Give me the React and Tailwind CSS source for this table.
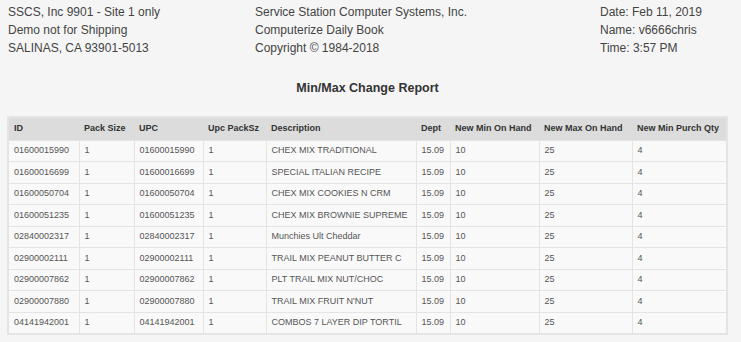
import React from "react";

const rows = [
  ["01600015990", "CHEX MIX TRADITIONAL"],
  ["01600016699", "SPECIAL ITALIAN RECIPE"],
  ["01600050704", "CHEX MIX COOKIES N CRM"],
  ["01600051235", "CHEX MIX BROWNIE SUPREME"],
  ["02840002317", "Munchies Ult Cheddar"],
  ["02900002111", "TRAIL MIX PEANUT BUTTER C"],
  ["02900007862", "PLT TRAIL MIX NUT/CHOC"],
  ["02900007880", "TRAIL MIX FRUIT N'NUT"],
  ["04141942001", "COMBOS 7 LAYER DIP TORTIL"],
];

const cols = [
  { label: "ID", w: "w-[71px]" },
  { label: "Pack Size", w: "w-[55px]" },
  { label: "UPC", w: "w-[69px]" },
  { label: "Upc PackSz", w: "w-[63px]" },
  { label: "Description", w: "w-[150px]" },
  { label: "Dept", w: "w-[34px]" },
  { label: "New Min On Hand", w: "w-[89px]" },
  { label: "New Max On Hand", w: "w-[93px]" },
  { label: "New Min Purch Qty", w: "" },
];

export default function App() {
  return (
    <div className="min-h-[342px] w-[741px] bg-[#f5f5f5] text-[#444] font-['Liberation_Sans',Arial,sans-serif]">
      <div className="flex pt-[3px] pl-2 text-[12px] leading-[18px]">
        <div className="w-[247px]">
          <div>SSCS, Inc 9901 - Site 1 only</div>
          <div>Demo not for Shipping</div>
          <div>SALINAS, CA 93901-5013</div>
        </div>
        <div className="w-[345px]">
          <div>Service Station Computer Systems, Inc.</div>
          <div>Computerize Daily Book</div>
          <div>Copyright © 1984-2018</div>
        </div>
        <div>
          <div>Date: Feb 11, 2019</div>
          <div>Name: v6666chris</div>
          <div>Time: 3:57 PM</div>
        </div>
      </div>

      <h1 className="mt-[23px] text-center text-[12.5px] leading-[16px] font-bold text-[#333] pr-[6px]">
        Min/Max Change Report
      </h1>

      <div className="px-[7px] pt-[20px]">
        <table className="w-[721px] table-fixed border-collapse border-2 border-[#e4e4e4] bg-[#f9f9f9] text-[9px] text-[#555]">
          <thead>
            <tr className="h-[23px] bg-[#dcdcdc] text-left text-[#333]">
              {cols.map((c) => (
                <th key={c.label} className={`${c.w} px-[5px] font-bold`}>
                  {c.label}
                </th>
              ))}
            </tr>
          </thead>
          <tbody>
            {rows.map(([id, desc]) => (
              <tr key={id} className="h-[21.5px]">
                {[id, "1", id, "1", desc, "15.09", "10", "25", "4"].map((v, i) => (
                  <td
                    key={i}
                    className="border border-[#e4e4e4] px-[5px] whitespace-nowrap overflow-hidden"
                  >
                    {v}
                  </td>
                ))}
              </tr>
            ))}
          </tbody>
        </table>
      </div>
    </div>
  );
}
